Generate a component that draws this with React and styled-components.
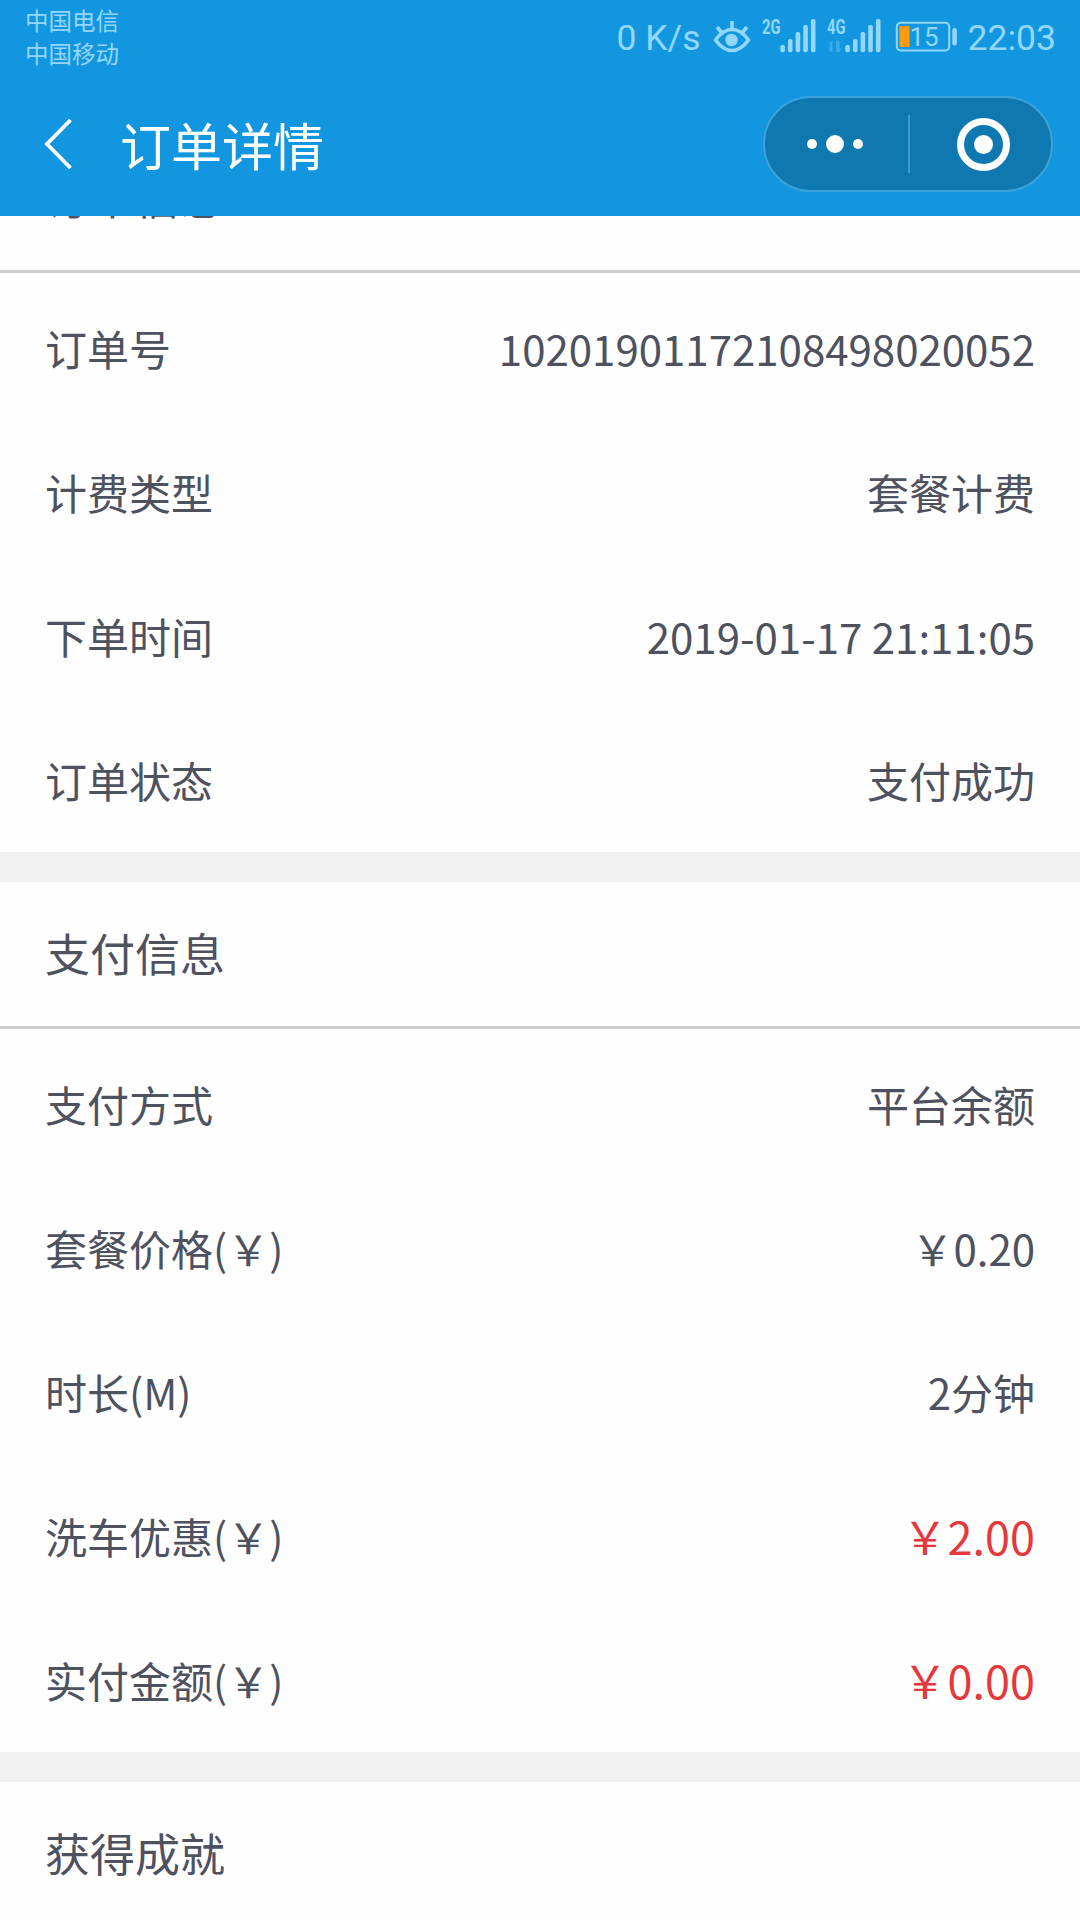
import React from "react";
import styled, { createGlobalStyle } from "styled-components";

const GlobalStyle = createGlobalStyle`
  * { box-sizing: border-box; }
  body {
    margin: 0;
    background: #fefefe;
    font-family: "Noto Sans CJK SC", "Noto Sans", sans-serif;
  }
`;

const Screen = styled.div`
  width: 1080px;
  height: 1920px;
  overflow: hidden;
  display: flex;
  flex-direction: column;
  background: #fefefe;
  color: #4e515e;
`;

const Header = styled.header`
  flex: none;
  height: 216px;
  background: #1296df;
  color: #fff;
`;

const StatusBar = styled.div`
  height: 72px;
  display: flex;
  justify-content: space-between;
  padding: 4px 24px 0 25px;
  color: #93d7fc;
`;

const Carriers = styled.div`
  display: flex;
  flex-direction: column;
  font-size: 23.5px;
  line-height: 32.5px;
`;

const StatusIcons = styled.div`
  display: flex;
  align-items: flex-start;
  height: 68px;
`;

const StatusText = styled.span`
  font-family: Roboto, sans-serif;
  font-size: 35.5px;
  line-height: 42px;
  padding-top: 13px;
  margin-left: ${(p) => p.$gap || 0}px;
  white-space: nowrap;
`;

const StatusGlyph = styled.svg`
  display: block;
  flex: none;
  margin-top: -4px;
  margin-left: ${(p) => p.$gap || 0}px;
  font-family: Roboto, sans-serif;
`;

const NavBar = styled.div`
  height: 144px;
  display: flex;
  align-items: center;
  padding: 0 27px 0 44px;
`;

const BackIcon = styled.svg`
  display: block;
  width: 28px;
  height: 54px;
`;

const Title = styled.h1`
  margin: 0 auto 0 48px;
  font-size: 51px;
  line-height: 72px;
  font-weight: 400;
`;

const Capsule = styled.div`
  width: 290px;
  height: 96px;
  border: 2px solid #3da3dc;
  border-radius: 48px;
  background: #1078b0;
  display: flex;
  align-items: center;
`;

const CapsuleButton = styled.div`
  width: ${(p) => p.$width}px;
  display: flex;
  align-items: center;
  justify-content: center;
  gap: 9px;
  padding: 0 ${(p) => p.$right || 0}px 0 ${(p) => p.$left || 0}px;
`;

const CapsuleDivider = styled.div`
  width: 2px;
  height: 58px;
  background: #3d9bcf;
`;

const Dot = styled.span`
  width: ${(p) => p.$size}px;
  height: ${(p) => p.$size}px;
  border-radius: 50%;
  background: #fff;
`;

const Ring = styled.span`
  width: 53px;
  height: 53px;
  border: 7px solid #fff;
  border-radius: 50%;
  display: flex;
  align-items: center;
  justify-content: center;
`;

const Content = styled.main`
  flex: 1;
  min-height: 0;
  overflow: hidden;
`;

const Scrolled = styled.div`
  margin-top: -90px;
`;

const Section = styled.section`
  border-bottom: 30px solid #f0f0f0;
`;

const SectionTitle = styled.h2`
  margin: 0;
  height: 147px;
  padding: 0 45px;
  border-bottom: 3px solid #cdcdcd;
  font-size: 45px;
  line-height: ${(p) => p.$line || 141}px;
  font-weight: 400;
`;

const Rows = styled.div`
  padding: 3px 45px 0;
  height: ${(p) => p.$height}px;
`;

const Row = styled.div`
  height: 144px;
  display: flex;
  align-items: center;
  justify-content: space-between;
  font-size: 42px;
  line-height: 60px;
`;

const Value = styled.span`
  color: ${(p) => (p.$accent ? "#e4393c" : "inherit")};
  font-size: ${(p) => (p.$accent ? 45 : 42)}px;
`;

const EyeIcon = () => (
  <StatusGlyph $gap={12} width="38" height="72" viewBox="713 0 38 72" fill="none" stroke="#93d7fc">
    <path d="M715.5 40 Q723 29.5 732 29.5 Q741 29.5 748.5 40 Q741 50.5 732 50.5 Q723 50.5 715.5 40 Z" strokeWidth="3.6" strokeLinejoin="round" />
    <circle cx="731.5" cy="40" r="6.2" fill="#93d7fc" stroke="none" />
    <path d="M732 21v8M717 27l5.5 6.5M747 27l-5.5 6.5" strokeWidth="3.6" />
  </StatusGlyph>
);

const BARS = [45, 39, 32, 25, 19];

const SignalIcon = ({ label, gap, traffic }) => (
  <StatusGlyph $gap={gap} width="54" height="72" viewBox="0 0 54 72" fill="#93d7fc">
    <text x="0" y="34" fontSize="20.5" fontWeight="700" textLength="18.5" lengthAdjust="spacingAndGlyphs">{label}</text>
    {traffic && (
      <path d="M2 43l3.5-2.5v11h-3v-8zM9 40.5h3.5v8h2.5l-3 3.5h-3z" fill="#3aabe8" />
    )}
    {BARS.map((top, i) => (
      <rect key={top} x={18.3 + i * 7.65} y={top} width="4.6" height={52.2 - top} rx="1.8" />
    ))}
  </StatusGlyph>
);

const BatteryIcon = () => (
  <StatusGlyph $gap={14} width="62" height="72" viewBox="895 0 62 72">
    <rect x="896.8" y="22.8" width="52.4" height="27.6" rx="4" fill="none" stroke="#93d7fc" strokeWidth="2" />
    <rect x="952.3" y="28" width="4.5" height="17.5" rx="2" fill="#93d7fc" />
    <rect x="899.5" y="26" width="10" height="21" fill="#ff9b0b" />
    <text x="909.5" y="45.7" fontSize="26" fill="#93d7fc">15</text>
  </StatusGlyph>
);

const ORDER = [
  ["订单号", "10201901172108498020052"],
  ["计费类型", "套餐计费"],
  ["下单时间", "2019-01-17 21:11:05"],
  ["订单状态", "支付成功"],
];

// Full-width yen sign
const YEN = "\uffe5";

const PAYMENT = [
  ["支付方式", "平台余额"],
  [`套餐价格(${YEN})`, `${YEN}0.20`],
  ["时长(M)", "2分钟"],
  [`洗车优惠(${YEN})`, `${YEN}2.00`, true],
  [`实付金额(${YEN})`, `${YEN}0.00`, true],
];

const InfoSection = ({ title, rows, height, line }) => (
  <Section>
    <SectionTitle $line={line}>{title}</SectionTitle>
    <Rows $height={height}>
      {rows.map(([label, value, accent]) => (
        <Row key={label}>
          <span>{label}</span>
          <Value $accent={accent}>{value}</Value>
        </Row>
      ))}
    </Rows>
  </Section>
);

export default function App() {
  return (
    <Screen>
      <GlobalStyle />
      <Header>
        <StatusBar>
          <Carriers>
            <span>中国电信</span>
            <span>中国移动</span>
          </Carriers>
          <StatusIcons>
            <StatusText>0 K/s</StatusText>
            <EyeIcon />
            <SignalIcon label="2G" gap={11} />
            <SignalIcon label="4G" gap={11} traffic />
            <BatteryIcon />
            <StatusText $gap={11}>22:03</StatusText>
          </StatusIcons>
        </StatusBar>
        <NavBar>
          <BackIcon viewBox="0 0 28 54" fill="none" stroke="#fff" strokeWidth="3.8">
            <path d="M26.5 3L3 27l23.5 24" />
          </BackIcon>
          <Title>订单详情</Title>
          <Capsule>
            <CapsuleButton $width={143} $right={3}>
              <Dot $size={10} />
              <Dot $size={18} />
              <Dot $size={10} />
            </CapsuleButton>
            <CapsuleDivider />
            <CapsuleButton $width={141} $left={5}>
              <Ring>
                <Dot $size={19} />
              </Ring>
            </CapsuleButton>
          </Capsule>
        </NavBar>
      </Header>
      <Content>
        <Scrolled>
          <InfoSection title="订单信息" rows={ORDER} height={579} line={139} />
          <InfoSection title="支付信息" rows={PAYMENT} height={723} />
          <SectionTitle>获得成就</SectionTitle>
        </Scrolled>
      </Content>
    </Screen>
  );
}
